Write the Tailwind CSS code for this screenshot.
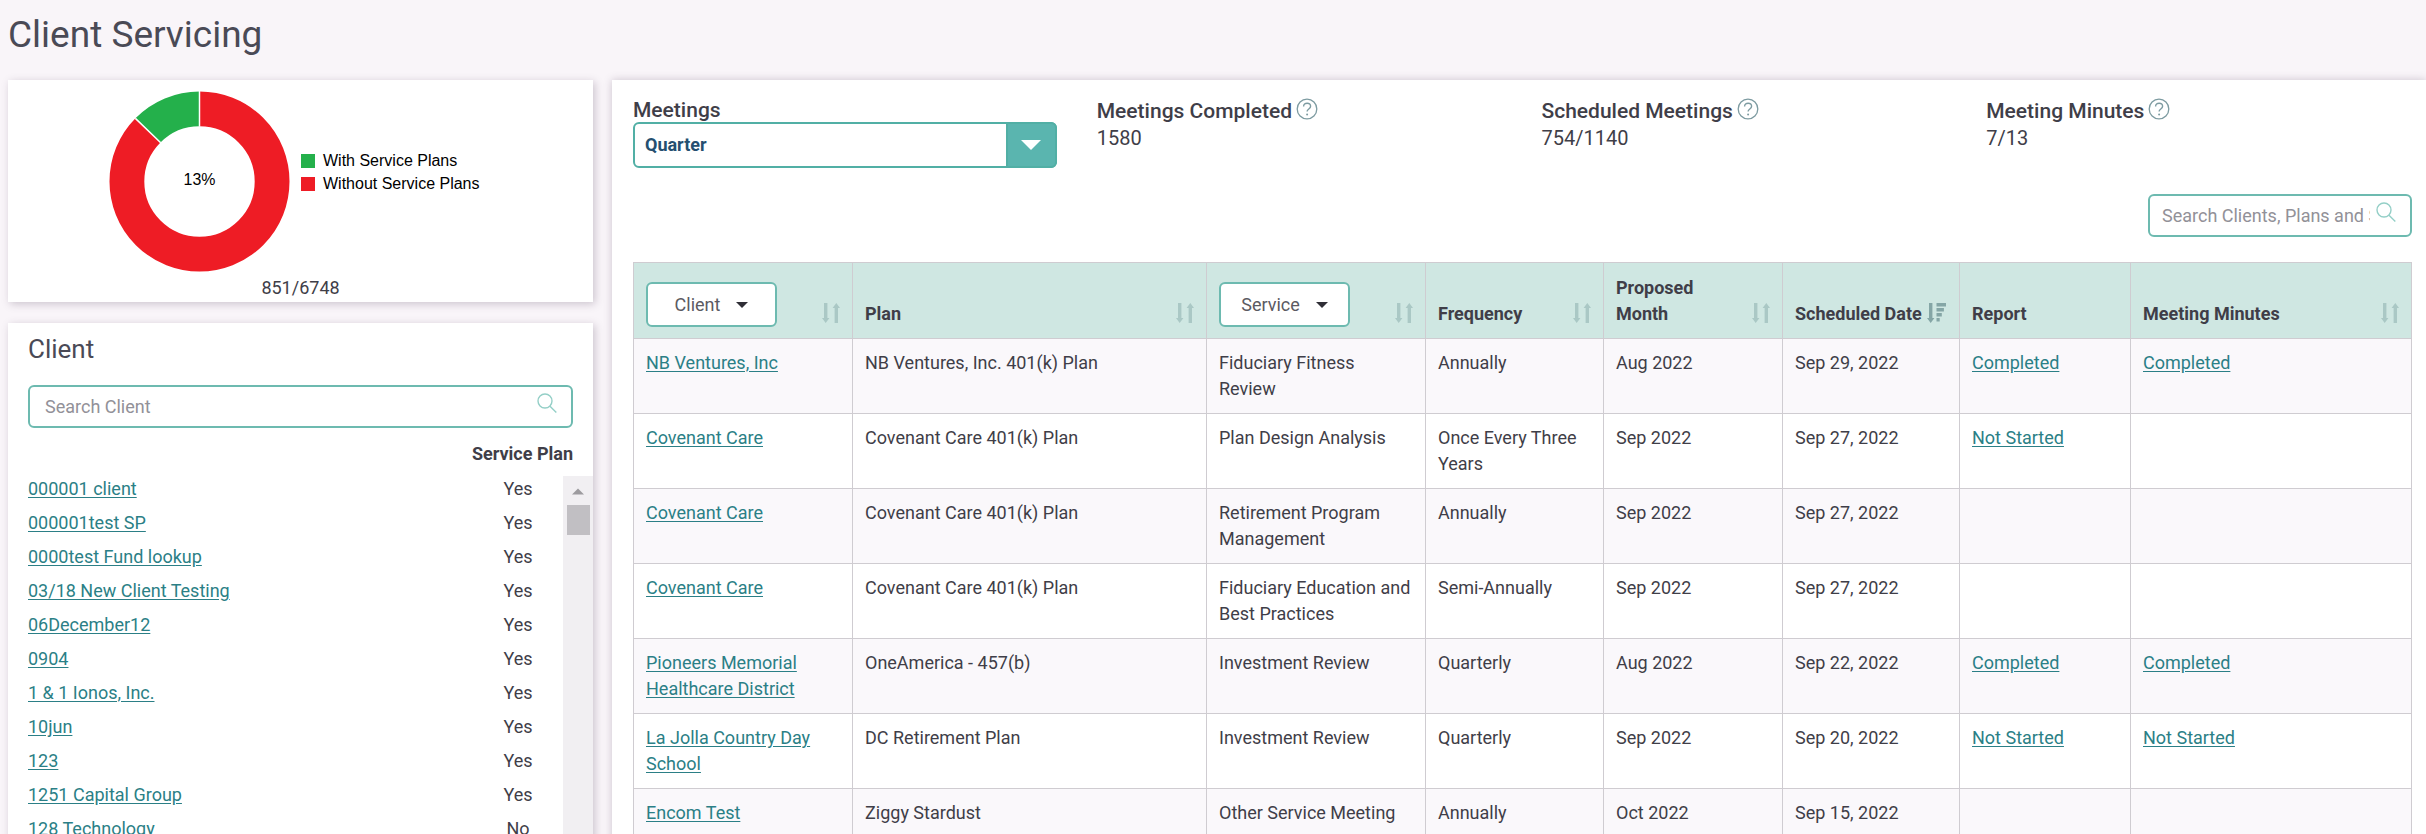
<!DOCTYPE html>
<html lang="en">

<head>
    <meta charset="UTF-8">
    <meta name="viewport" content="width=device-width, initial-scale=1.0">
    <title>Client Servicing</title>
    <script src="https://cdn.jsdelivr.net/npm/@tailwindcss/browser@4"></script>
    <script>
        const clients = [
            { name: "000001 client", servicePlan: "Yes" },
            { name: "000001test SP", servicePlan: "Yes" },
            { name: "0000test Fund lookup", servicePlan: "Yes" },
            { name: "03/18 New Client Testing", servicePlan: "Yes" },
            { name: "06December12", servicePlan: "Yes" },
            { name: "0904", servicePlan: "Yes" },
            { name: "1 & 1 Ionos, Inc.", servicePlan: "Yes" },
            { name: "10jun", servicePlan: "Yes" },
            { name: "123", servicePlan: "Yes" },
            { name: "1251 Capital Group", servicePlan: "Yes" },
            { name: "128 Technology", servicePlan: "No" }
        ];

        const meetings = [
            { client: "NB Ventures, Inc", plan: "NB Ventures, Inc. 401(k) Plan", service: "Fiduciary Fitness Review", frequency: "Annually", month: "Aug 2022", date: "Sep 29, 2022", report: "Completed", minutes: "Completed" },
            { client: "Covenant Care", plan: "Covenant Care 401(k) Plan", service: "Plan Design Analysis", frequency: "Once Every Three Years", month: "Sep 2022", date: "Sep 27, 2022", report: "Not Started", minutes: "" },
            { client: "Covenant Care", plan: "Covenant Care 401(k) Plan", service: "Retirement Program Management", frequency: "Annually", month: "Sep 2022", date: "Sep 27, 2022", report: "", minutes: "" },
            { client: "Covenant Care", plan: "Covenant Care 401(k) Plan", service: "Fiduciary Education and Best Practices", frequency: "Semi-Annually", month: "Sep 2022", date: "Sep 27, 2022", report: "", minutes: "" },
            { client: "Pioneers Memorial Healthcare District", plan: "OneAmerica - 457(b)", service: "Investment Review", frequency: "Quarterly", month: "Aug 2022", date: "Sep 22, 2022", report: "Completed", minutes: "Completed" },
            { client: "La Jolla Country Day School", plan: "DC Retirement Plan", service: "Investment Review", frequency: "Quarterly", month: "Sep 2022", date: "Sep 20, 2022", report: "Not Started", minutes: "Not Started" },
            { client: "Encom Test", plan: "Ziggy Stardust", service: "Other Service Meeting", frequency: "Annually", month: "Oct 2022", date: "Sep 15, 2022", report: "", minutes: "" }
        ];

        function link(text) {
            return text ? `<a href="#" class="text-[#2b7f86] underline underline-offset-2">${text.replace('&', '&amp;')}</a>` : '';
        }

        // Client list in the left column
        function renderClients() {
            document.getElementById('client-list').innerHTML = clients.map(client => `
                <tr>
                    <td class="pb-2 pl-5">${link(client.name)}</td>
                    <td class="w-[90px] pb-2 text-center">${client.servicePlan}</td>
                </tr>
            `).join('');
        }

        // Meetings table
        function renderMeetings() {
            const cell = 'border border-[#cfccd1] px-3 py-[11px]';
            document.getElementById('meeting-list').innerHTML = meetings.map(m => `
                <tr class="h-[75px] align-top odd:bg-[#faf8fb]">
                    <td class="${cell}">${link(m.client)}</td>
                    <td class="${cell}">${m.plan}</td>
                    <td class="${cell}">${m.service}</td>
                    <td class="${cell}">${m.frequency}</td>
                    <td class="${cell}">${m.month}</td>
                    <td class="${cell}">${m.date}</td>
                    <td class="${cell}">${link(m.report)}</td>
                    <td class="${cell}">${link(m.minutes)}</td>
                </tr>
            `).join('');
        }

        window.onload = () => {
            renderClients();
            renderMeetings();
        };
    </script>
</head>

<body class="flex h-screen flex-col overflow-hidden bg-[#f9f5f9] font-[Roboto,sans-serif] text-[18px] leading-[26px] text-[#3f3e48]">

    <!-- Shared icons -->
    <svg class="hidden">
        <symbol id="icon-search" viewBox="0 0 20 20">
            <circle cx="8" cy="8" r="7" fill="none" stroke="currentColor" stroke-width="1.4" />
            <path d="M13 13.2 19.3 19.5" fill="none" stroke="currentColor" stroke-width="1.4" />
        </symbol>
        <symbol id="icon-help" viewBox="0 0 22 22">
            <circle cx="11" cy="11" r="9.8" fill="none" stroke="currentColor" stroke-width="1.3" />
            <path d="M7.6 8.6C7.6 6.4 9.1 5.2 11.1 5.2s3.5 1.2 3.5 3.1c0 2.7-3.5 2.7-3.5 5.3" fill="none" stroke="currentColor" stroke-width="1.4" />
            <circle cx="11.1" cy="16.4" r="1" fill="currentColor" />
        </symbol>
        <symbol id="icon-sort" viewBox="0 0 18 20">
            <path d="M2 0h3.4v15H7.4L3.7 20 0 15h2zM12.6 20H16V5h2L14.3 0l-3.7 5h2z" fill="currentColor" />
        </symbol>
        <symbol id="icon-sort-desc" viewBox="0 0 20 20">
            <path d="M2 0h3.4v15H7.4L3.7 20 0 15h2zM9.5 0H19v3.4H9.5zM9.5 5h7.4v3.4H9.5zM9.5 10h5.3v3.4H9.5zM9.5 15h3.2v3.4H9.5z" fill="currentColor" />
        </symbol>
        <symbol id="icon-caret" viewBox="0 0 12 6">
            <path d="M0 0h12L6 6z" fill="currentColor" />
        </symbol>
    </svg>

    <header class="px-2 pt-[13px] pb-[23px]">
        <h1 class="text-[37px] leading-11 text-[#4a4a56]">Client Servicing</h1>
    </header>

    <main class="grid min-h-0 flex-1 grid-cols-[586fr_1813fr] gap-[19px] pl-2">

        <!-- Left column -->
        <div class="flex min-h-0 flex-col gap-[21px]">

            <section class="bg-white pt-[11px] pb-0.5 shadow-[2px_2px_8px_rgba(70,50,80,0.25)]">
                <div class="flex gap-[11px] pl-[101px] font-['Liberation_Sans',sans-serif] text-[16px] leading-[23px] text-black">
                    <svg class="size-[181px]" viewBox="0 0 182 182">
                        <g fill="none" stroke-width="35" transform="rotate(-90 91 91)">
                            <circle cx="91" cy="91" r="73" pathLength="1000" stroke="#ee1c25" stroke-dasharray="874 126" />
                            <circle cx="91" cy="91" r="73" pathLength="1000" stroke="#24b04b" stroke-dasharray="126 874" stroke-dashoffset="-874" />
                        </g>
                        <path d="M91 0V36M26.5 27.5 52 52" stroke="#fff" stroke-width="1.5" />
                        <text x="91" y="95" text-anchor="middle">13%</text>
                    </svg>
                    <ul class="mt-[58px]">
                        <li class="flex items-center gap-2"><span class="size-3.5 bg-[#24b04b]"></span>With Service Plans</li>
                        <li class="flex items-center gap-2"><span class="size-3.5 bg-[#ee1c25]"></span>Without Service Plans</li>
                    </ul>
                </div>
                <p class="mt-1 text-center leading-6">851/6748</p>
            </section>

            <section class="flex min-h-0 flex-1 flex-col bg-white pt-2.5 shadow-[2px_2px_8px_rgba(70,50,80,0.25)]">
                <div class="px-5">
                    <h2 class="text-[26px] leading-8 text-[#4a4a56]">Client</h2>
                    <div class="relative mt-5">
                        <input type="text" aria-label="Search Client" placeholder="Search Client"
                            class="block h-[43px] w-full rounded-md border-2 border-[#6dbab0] pr-10 pl-[15px] placeholder:text-[#929198] focus:outline-none">
                        <svg class="pointer-events-none absolute top-2 right-4 size-5 text-[#94cfc7]"><use href="#icon-search" /></svg>
                    </div>
                    <p class="mt-3.5 text-right leading-6 font-bold">Service Plan</p>
                </div>
                <div class="mt-2.5 flex min-h-0 flex-1 overflow-hidden">
                    <table class="flex-1 self-start" aria-label="Clients and service plans">
                        <tbody id="client-list"></tbody>
                    </table>
                    <!-- Scroll bar -->
                    <div class="flex w-[30px] flex-col items-center bg-[#f1eff2] pt-3">
                        <svg class="h-[7px] w-3 rotate-180 text-[#9d9b9f]"><use href="#icon-caret" /></svg>
                        <div class="mt-2.5 h-[30px] w-[23px] bg-[#c1bfc3]"></div>
                    </div>
                </div>
            </section>
        </div>

        <!-- Right column -->
        <section class="bg-white pt-[18px] pr-3.5 pl-[21px] shadow-[0_0_8px_rgba(70,50,80,0.25)]">

            <div class="grid grid-cols-4 text-[20px] leading-6">
                <div class="pr-[21px]">
                    <label for="period" class="block text-[21px] leading-6 font-medium">Meetings</label>
                    <div class="relative">
                        <select id="period" class="block h-[46px] w-full appearance-none rounded-md border-2 border-[#51afa5] bg-white pl-2.5 text-[18px] font-bold text-[#254f70] focus:outline-none">
                            <option>Quarter</option>
                        </select>
                        <span class="pointer-events-none absolute inset-y-0 right-0 flex w-[51px] items-center justify-center rounded-r-md border-2 border-[#51afa5] bg-[#5ab5af] text-white">
                            <svg class="h-2.5 w-5" viewBox="0 0 20 10"><path d="M0 0h20L10 10z" fill="currentColor" /></svg>
                        </span>
                    </div>
                </div>
                <div class="pl-[19px]">
                    <h3 class="flex items-center gap-1 text-[21px] leading-[26px] font-medium">Meetings Completed <svg class="mb-1 size-[22px] text-[#7d9ba1]"><use href="#icon-help" /></svg></h3>
                    <p class="mt-0.5">1580</p>
                </div>
                <div class="pl-[19px]">
                    <h3 class="flex items-center gap-1 text-[21px] leading-[26px] font-medium">Scheduled Meetings <svg class="mb-1 size-[22px] text-[#7d9ba1]"><use href="#icon-help" /></svg></h3>
                    <p class="mt-0.5">754/1140</p>
                </div>
                <div class="pl-[19px]">
                    <h3 class="flex items-center gap-1 text-[21px] leading-[26px] font-medium">Meeting Minutes <svg class="mb-1 size-[22px] text-[#7d9ba1]"><use href="#icon-help" /></svg></h3>
                    <p class="mt-0.5">7/13</p>
                </div>
            </div>

            <div class="relative mt-[26px] ml-auto w-[264px]">
                <input type="text" aria-label="Search Clients, Plans and Services" placeholder="Search Clients, Plans and Services"
                    class="block h-[43px] w-full rounded-md border-2 border-[#6dbab0] pr-10 pl-3 placeholder:text-[#929198] focus:outline-none">
                <svg class="pointer-events-none absolute top-2 right-4 size-5 text-[#94cfc7]"><use href="#icon-search" /></svg>
            </div>

            <table class="mt-[25px] w-full table-fixed border-collapse">
                <colgroup>
                    <col class="w-[219px]">
                    <col class="w-[354px]">
                    <col class="w-[219px]">
                    <col class="w-[178px]">
                    <col class="w-[179px]">
                    <col class="w-[177px]">
                    <col class="w-[171px]">
                    <col class="w-[281px]">
                </colgroup>
                <thead class="bg-[#cfe7e2] text-left align-bottom">
                    <tr class="h-[76px]">
                        <th class="border border-[#cfccd1] px-3 pb-[11px] font-bold">
                            <div class="flex items-end justify-between">
                                <button class="flex h-[45px] w-[131px] items-center justify-center gap-4 rounded-md border-2 border-[#6dbab0] bg-white font-normal text-[#5b5a62]">Client <svg class="h-1.5 w-3 text-[#2f2e36]"><use href="#icon-caret" /></svg></button>
                                <svg class="mb-1 h-5 w-[18px] text-[#aac8c5]"><use href="#icon-sort" /></svg>
                            </div>
                        </th>
                        <th class="border border-[#cfccd1] px-3 pb-[11px] font-bold">
                            <div class="flex items-end justify-between">Plan <svg class="mb-1 h-5 w-[18px] text-[#aac8c5]"><use href="#icon-sort" /></svg></div>
                        </th>
                        <th class="border border-[#cfccd1] px-3 pb-[11px] font-bold">
                            <div class="flex items-end justify-between">
                                <button class="flex h-[45px] w-[131px] items-center justify-center gap-4 rounded-md border-2 border-[#6dbab0] bg-white font-normal text-[#5b5a62]">Service <svg class="h-1.5 w-3 text-[#2f2e36]"><use href="#icon-caret" /></svg></button>
                                <svg class="mb-1 h-5 w-[18px] text-[#aac8c5]"><use href="#icon-sort" /></svg>
                            </div>
                        </th>
                        <th class="border border-[#cfccd1] px-3 pb-[11px] font-bold">
                            <div class="flex items-end justify-between">Frequency <svg class="mb-1 h-5 w-[18px] text-[#aac8c5]"><use href="#icon-sort" /></svg></div>
                        </th>
                        <th class="border border-[#cfccd1] px-3 pb-[11px] font-bold">
                            <div class="flex items-end justify-between">Proposed<br>Month <svg class="mb-1 h-5 w-[18px] text-[#aac8c5]"><use href="#icon-sort" /></svg></div>
                        </th>
                        <th class="border border-[#cfccd1] px-3 pb-[11px] font-bold">
                            <div class="flex items-end justify-between whitespace-nowrap">Scheduled Date <svg class="mb-1 h-5 w-5 text-[#85a6a6]"><use href="#icon-sort-desc" /></svg></div>
                        </th>
                        <th class="border border-[#cfccd1] px-3 pb-[11px] font-bold">Report</th>
                        <th class="border border-[#cfccd1] px-3 pb-[11px] font-bold">
                            <div class="flex items-end justify-between">Meeting Minutes <svg class="mb-1 h-5 w-[18px] text-[#aac8c5]"><use href="#icon-sort" /></svg></div>
                        </th>
                    </tr>
                </thead>
                <tbody id="meeting-list"></tbody>
            </table>
        </section>
    </main>

</body>

</html>
